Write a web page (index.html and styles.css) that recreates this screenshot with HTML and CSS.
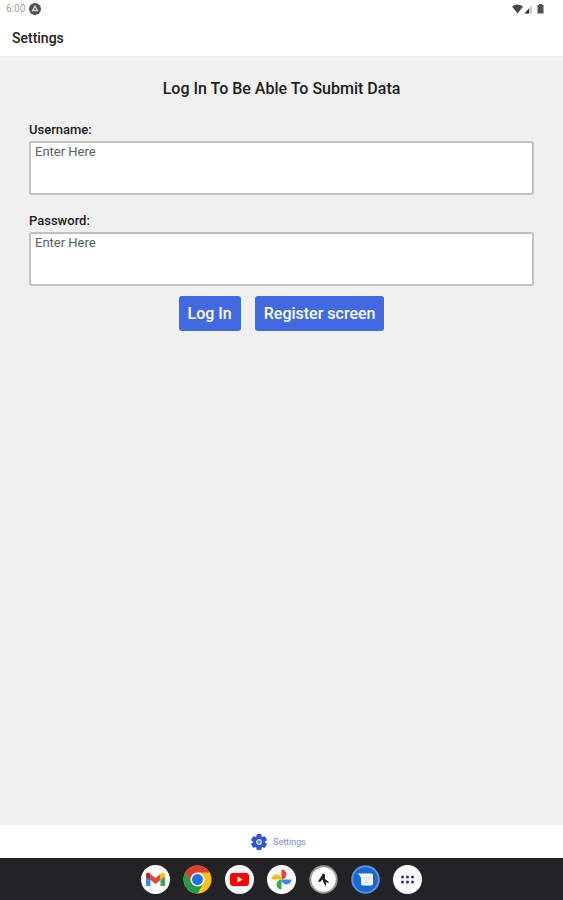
FILE: index.html
```html
<!DOCTYPE html>
<html lang="en">
<head>
<meta charset="utf-8">
<meta name="viewport" content="width=device-width, initial-scale=1">
<title>Settings</title>
<link rel="stylesheet" href="styles.css">
</head>
<body>
<div class="status">
  <span class="clock">6:00</span>
  <svg class="status-app" width="12" height="12" viewBox="0 0 12 12" aria-hidden="true"><circle cx="6" cy="6" r="6" fill="#505050"/><path d="M3 8.500 6 3l3 5.500M4.500 7.500h3" fill="none" stroke="#ddd" stroke-width="1.300"/></svg>
  <svg class="status-icons" width="34" height="12" viewBox="0 0 34 12" aria-hidden="true"><path d="M0 3.500Q5.500-.5 11 3.500L5.500 10.500Z" fill="#484848"/><path d="M12.500 10.500 20 2v8.500Z" fill="#ccc"/><path d="M12.500 10.500 17 5.500v5Z" fill="#303030"/><path d="M25.500 2h1.500V1h3v1h1.500v8.500h-6Z" fill="#505050"/></svg>
</div>
<header class="header"><h1 class="header-title">Settings</h1></header>
<main class="main">
  <h2 class="title">Log In To Be Able To Submit Data</h2>
  <form class="form">
    <div class="field">
      <label class="label" for="username">Username:</label>
      <input class="input" id="username" type="text" placeholder="Enter Here">
    </div>
    <div class="field">
      <label class="label" for="password">Password:</label>
      <input class="input" id="password" type="password" placeholder="Enter Here">
    </div>
    <div class="actions">
      <button class="button" type="submit">Log In</button>
      <button class="button" type="button">Register screen</button>
    </div>
  </form>
</main>
<nav class="tabs">
  <a class="tab" href="#settings">
    <svg width="16" height="16" viewBox="0 0 16 16" aria-hidden="true"><g fill="#2f55d4"><circle cx="8" cy="8" r="6"/><rect x="5.500" width="5" height="16" rx="1"/><rect x="5.500" width="5" height="16" rx="1" transform="rotate(60 8 8)"/><rect x="5.500" width="5" height="16" rx="1" transform="rotate(120 8 8)"/></g><circle cx="8" cy="8" r="2.300" fill="#5f80ea" stroke="#e4eaff" stroke-width="1.200"/></svg>
    <span>Settings</span>
  </a>
</nav>
<nav class="dock" aria-label="Apps">
  <a class="app" href="#mail" aria-label="Mail"><svg viewBox="0 0 29 29"><circle cx="14.500" cy="14.500" r="14.500" fill="#fff"/><path d="M5 10v11h4.500V13Z" fill="#4285f4"/><path d="M19.500 13v8H24V10Z" fill="#34a853"/><path d="M9.500 9l5 4 5-4V15l-5 4-5-4Z" fill="#ea4335"/><path d="M5 11.500V9.500Q5 7.500 7.500 7.500l2 1.500V15L5 12Z" fill="#c5221f"/><path d="M24 11.500V9.500Q24 7.500 21.500 7.500l-2 1.500V15l4.500-3Z" fill="#fbbc04"/></svg></a>
  <a class="app" href="#browser" aria-label="Browser"><svg viewBox="0 0 29 29"><circle cx="14.500" cy="14.500" r="14" fill="#fbc116"/><path d="M2.380 7.500A14 14 0 0 1 26.620 7.500H14.500L8.440 18Z" fill="#e33b2e"/><path d="M2.380 7.500A14 14 0 0 0 14.500 28.500L20.560 18H8.440Z" fill="#229c48"/><circle cx="14.500" cy="14.500" r="7" fill="#fff"/><circle cx="14.500" cy="14.500" r="5.500" fill="#1a73e8"/></svg></a>
  <a class="app" href="#video" aria-label="Video"><svg viewBox="0 0 29 29"><circle cx="14.500" cy="14.500" r="14.500" fill="#fff"/><rect x="5" y="8" width="19" height="13" rx="3" fill="#f00"/><path d="M12.500 11.500v6l5-3Z" fill="#fff"/></svg></a>
  <a class="app" href="#photos" aria-label="Photos"><svg viewBox="0 0 29 29"><circle cx="14.500" cy="14.500" r="14.500" fill="#fff"/><path d="M14.500 4.500a5 5 0 0 1 0 10Z" fill="#ea4335"/><path d="M24.500 14.500a5 5 0 0 1-10 0Z" fill="#4285f4"/><path d="M14.500 24.500a5 5 0 0 1 0-10Z" fill="#34a853"/><path d="M4.500 14.500a5 5 0 0 1 10 0Z" fill="#fbbc04"/></svg></a>
  <a class="app" href="#app" aria-label="App"><svg viewBox="0 0 29 29"><circle cx="14.500" cy="14.500" r="13.200" fill="#fff" stroke="#999" stroke-width="2"/><path d="M9 16.500l4-6.500 1 4-3 3ZM13 8.500l3 1v4.500l4 3-1 1-2-1v4.500l-3-5Z" fill="#222"/></svg></a>
  <a class="app" href="#messages" aria-label="Messages"><svg viewBox="0 0 29 29"><circle cx="14.500" cy="14.500" r="13.300" fill="#1769d2" stroke="#5795df" stroke-width="2"/><path d="M7 8.500h13q2 0 2 2v8q0 2-2 2h-8q-2 0-2-2v-6Z" fill="#fff"/><path d="M12.500 12.500h7M12.500 15h7M12.500 17.500h7" stroke="#bcd6f8" stroke-width="1.200"/></svg></a>
  <a class="app" href="#apps" aria-label="All apps"><svg viewBox="0 0 29 29"><circle cx="14.500" cy="14.500" r="14.500" fill="#fafaff"/><g fill="#34326e"><circle cx="9.500" cy="12" r="1.500"/><circle cx="14.500" cy="12" r="1.500"/><circle cx="19.500" cy="12" r="1.500"/><circle cx="9.500" cy="17" r="1.500"/><circle cx="14.500" cy="17" r="1.500"/><circle cx="19.500" cy="17" r="1.500"/></g></svg></a>
</nav>
</body>
</html>
```
FILE: styles.css
```css
* {
  box-sizing: border-box;
}

body {
  margin: 0;
  min-height: 100vh;
  display: flex;
  flex-direction: column;
  background: #f0f0f0;
  color: #1c1c1e;
  font-family: Roboto, "Liberation Sans", sans-serif;
}

.status {
  display: flex;
  align-items: center;
  gap: 4px;
  height: 18px;
  padding: 0 17px 0 6px;
  background: #fff;
}

.clock {
  color: #a4a4a4;
  font-size: 10px;
  line-height: 12px;
}

.status-icons {
  margin-left: auto;
}

.header {
  padding: 11px 12px 9px;
  border-bottom: 1px solid #ececec;
  background: #fff;
}

.header-title {
  margin: 0;
  font-size: 14px;
  line-height: 18px;
  font-weight: 500;
}

.main {
  flex: 1;
  padding: 22px 29px;
}

.title {
  margin: 0 0 24px;
  font-size: 16px;
  line-height: 20px;
  font-weight: 500;
  text-align: center;
}

.form {
  display: flex;
  flex-direction: column;
}

.field {
  display: flex;
  flex-direction: column;
  margin-bottom: 19px;
}

.field:nth-of-type(2) {
  margin-bottom: 10px;
}

.label {
  font-size: 13px;
  line-height: 14px;
  font-weight: 500;
  margin-bottom: 4px;
}

.input {
  width: 100%;
  padding: 1px 4px 33px;
  border: 2px solid #c0c0c0;
  border-radius: 3px;
  background: #fff;
  color: #333;
  font-family: inherit;
  font-size: 13px;
  line-height: 16px;
}

.input::placeholder {
  color: #5c5c5c;
  opacity: 1;
}

.actions {
  display: flex;
  justify-content: center;
  gap: 14px;
}

.button {
  padding: 8px 9px 7px;
  border: 0;
  border-radius: 3px;
  background: #4169e1;
  color: #fff;
  font-family: inherit;
  font-size: 16px;
  line-height: 20px;
  font-weight: 500;
}

.tabs {
  display: flex;
  justify-content: center;
  padding: 9px 6px 8px 0;
  background: #fff;
}

.tab {
  display: flex;
  align-items: center;
  gap: 6px;
  color: #7f88e4;
  font-size: 9px;
  line-height: 16px;
  text-decoration: none;
}

.dock {
  display: flex;
  justify-content: center;
  gap: 13px;
  padding: 7px 0 6px;
  background: #222227;
}

.app {
  display: block;
  width: 29px;
  height: 29px;
}

.app svg {
  display: block;
}
```
